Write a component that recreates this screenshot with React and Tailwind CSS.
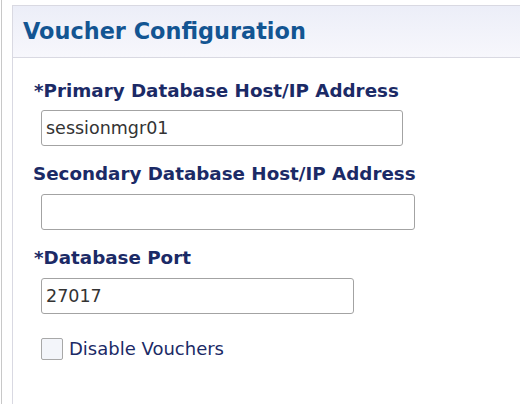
import React from "react";

const labelCls = "block text-[18.3px] font-bold text-[#1b2a66] leading-[22px]";
const inputCls =
  "block h-[36px] rounded-[3px] border border-[#a3a3a3] bg-white px-[4px] text-[17.5px] text-[#333] outline-none";

export default function App() {
  return (
    <div className="h-[404px] w-[520px] overflow-hidden bg-white font-['DejaVu_Sans',sans-serif]">
      <div className="flex h-full">
        <div className="w-[2px] shrink-0 border-l border-[#c8c8c8] ml-px" />
        <div className="ml-[9px] mt-[5px] flex-1 border-l border-t border-[#d9d9e2]">
          {/* header */}
          <div className="h-[52px] border-b border-[#d9d9e2] bg-gradient-to-b from-[#eceef8] to-[#f7f7fc] pl-[10px] pt-[12px]">
            <h1 className="text-[22.4px] font-bold leading-[26px] text-[#135592]">Voucher Configuration</h1>
          </div>

          {/* form */}
          <div className="pl-[21px] pt-[22px]">
            <label className={labelCls}>*Primary Database Host/IP Address</label>
            <input className={`${inputCls} mt-[8px] ml-[7px] w-[362px]`} defaultValue="sessionmgr01" />

            <label className={`${labelCls} mt-[17px] -ml-px`}>Secondary Database Host/IP Address</label>
            <input className={`${inputCls} mt-[9px] ml-[7px] w-[374px]`} defaultValue="" />

            <label className={`${labelCls} mt-[17px]`}>*Database Port</label>
            <input className={`${inputCls} mt-[9px] ml-[7px] w-[313px]`} defaultValue="27017" />

            <label className="mt-[24px] ml-[7px] flex items-center gap-[6px]">
              <span className="block h-[22px] w-[22px] rounded-[2px] border border-[#a8a8a8] bg-[#f3f5fa]" />
              <span className="text-[18px] leading-[22px] text-[#1b2a66]">Disable Vouchers</span>
            </label>
          </div>
        </div>
      </div>
    </div>
  );
}
